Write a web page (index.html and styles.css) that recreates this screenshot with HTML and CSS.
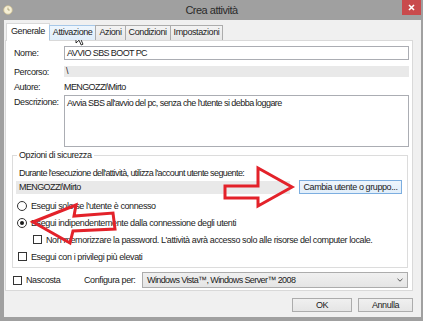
FILE: index.html
```html
<!DOCTYPE html>
<html>
<head>
    <meta charset="utf-8">
    <title>Crea attività</title>
    <link rel="stylesheet" href="styles.css">
</head>
<body>
    <div class="titlebar">
        <svg class="app-icon" width="10" height="10" viewBox="0 0 10 10"><circle cx="5" cy="5" r="4.3" fill="#f6f0d6" stroke="#cbbd8f" stroke-width="0.8"/><path d="M5 2.6V5h1.8" fill="none" stroke="#9a8c5c" stroke-width="0.7"/></svg>
        <div class="title">Crea attività</div>
        <div class="close"><svg width="7" height="7" viewBox="0 0 7 7"><path d="M1 1l5 5M6 1l-5 5" stroke="#fff" stroke-width="1.6"/></svg></div>
    </div>
    <div class="client">
        <div class="tabs">
            <div class="tab active">Generale</div>
            <div class="tab hover">Attivazione</div>
            <div class="tab">Azioni</div>
            <div class="tab">Condizioni</div>
            <div class="tab">Impostazioni</div>
        </div>
        <div class="panel">
            <div class="fields">
                <div class="row row-name">
                    <span class="label">Nome:</span>
                    <div class="input">AVVIO SBS BOOT PC</div>
                </div>
                <div class="row row-path">
                    <span class="label">Percorso:</span>
                    <div class="readonly">\</div>
                </div>
                <div class="row row-author">
                    <span class="label">Autore:</span>
                    <div class="value">MENGOZZI\Mirto</div>
                </div>
                <div class="row row-desc">
                    <span class="label">Descrizione:</span>
                    <div class="textarea">Avvia SBS all'avvio del pc, senza che l'utente si debba loggare</div>
                </div>
            </div>
            <fieldset class="group">
                <legend>Opzioni di sicurezza</legend>
                <div class="note">Durante l'esecuzione dell'attività, utilizza l'account utente seguente:</div>
                <div class="account-row">
                    <div class="account">MENGOZZI\Mirto</div>
                    <div class="btn btn-default">Cambia utente o gruppo...</div>
                </div>
                <div class="opt"><span class="radio"></span>Esegui solo se l'utente è connesso</div>
                <div class="opt"><span class="radio checked"></span>Esegui indipendentemente dalla connessione degli utenti</div>
                <div class="opt opt-sub"><span class="check"></span>Non memorizzare la password. L'attività avrà accesso solo alle risorse del computer locale.</div>
                <div class="opt opt-top"><span class="check"></span>Esegui con i privilegi più elevati</div>
            </fieldset>
            <div class="config-row">
                <div class="hidden-opt"><span class="check"></span>Nascosta</div>
                <div>Configura per:</div>
                <div class="select">
                    <span>Windows Vista™, Windows Server™ 2008</span>
                    <svg width="6" height="4" viewBox="0 0 6 4"><path d="M0.5 0.8L3 3.2 5.5 0.8" fill="none" stroke="#555" stroke-width="1"/></svg>
                </div>
            </div>
        </div>
        <div class="actions">
            <div class="btn btn-ok">OK</div>
            <div class="btn btn-cancel">Annulla</div>
        </div>
    </div>

    <svg class="overlay" width="423" height="321" viewBox="0 0 423 321">
        <path class="arrow" d="M225 186H258V168L292 187L258 206V198H225Z"/>
        <path class="arrow" d="M33 222L76 205L74 216L113 213L115 229L73 231L70 243Z"/>
        <path d="M76 31V43L79 40.2L81.2 45L83 44.2L80.8 39.4H84.5Z" fill="#fff" stroke="#000" stroke-width="0.8" stroke-linejoin="round"/>
    </svg>
</body>
</html>
```

FILE: styles.css
```css
* { box-sizing: border-box; }
html, body { margin: 0; padding: 0; }
body { width: 423px; height: 321px; overflow: hidden; position: relative; background: #a0a0a0; font-family: "Liberation Sans", Arial, sans-serif; font-size: 9px; letter-spacing: -0.4px; white-space: nowrap; color: #1b1b1b; }

.titlebar { display: grid; grid-template-columns: 1fr auto 1fr; align-items: center; height: 20px; }
.app-icon { display: block; margin-left: 3px; }
.title { font-size: 11px; letter-spacing: -0.5px; color: #2b2b2b; }
.close { justify-self: end; align-self: start; display: flex; align-items: center; justify-content: center; width: 19px; height: 15px; margin-right: 2px; background: #c94a4c; }
.close svg { display: block; }

.client { margin: 0 2px 0 4px; height: 297px; padding-top: 4px; background: #f0f0f0; }

.tabs { display: flex; align-items: flex-end; height: 16px; padding-left: 2px; position: relative; z-index: 1; }
.tab { height: 15px; line-height: 13px; padding: 0 3px; margin-left: -1px; border: 1px solid #acacac; border-bottom: none; background: linear-gradient(#f3f3f3, #e7e7e7); }
.tab:first-child { margin-left: 0; }
.tab.active { height: 18px; line-height: 15px; margin-bottom: -1px; padding: 0 4px; background: #fff; border-color: #d9d9d9; }
.tab.hover { background: linear-gradient(#eef6fd, #e0eefa); border-color: #a7c8e8; }

.panel { margin-left: 1px; width: 408px; height: 251px; background: #fff; border: 1px solid #d9d9d9; }

.fields { padding: 0 3px 0 8px; }
.row { display: flex; align-items: center; }
.row .label { width: 50px; flex: none; }
.row-name { margin-top: 5px; height: 14px; }
.row-path { margin-top: 6px; height: 11px; }
.row-author { margin-top: 4px; height: 12px; }
.row-desc { margin-top: 2px; height: 52px; align-items: flex-start; }
.row-desc .label { padding-top: 2px; line-height: 11px; }
.input { flex: 1; height: 14px; line-height: 12px; padding-left: 2px; border: 1px solid #abadb3; letter-spacing: -0.6px; }
.readonly { flex: 1; height: 11px; line-height: 11px; padding-left: 2px; background: #e9e9e9; }
.value { letter-spacing: -0.6px; }
.textarea { flex: 1; height: 52px; line-height: 11px; padding: 2px; border: 1px solid #abadb3; letter-spacing: -0.55px; }

.group { margin: 3px 4px 0 6px; padding: 0 5px 2px 3px; border: 1px solid #dcdcdc; min-width: 0; }
.group legend { margin-left: 1px; padding: 0 2px; line-height: 11px; }
.note { margin-top: 6px; padding-left: 3px; line-height: 12px; letter-spacing: -0.6px; }
.account-row { display: flex; align-items: center; margin-top: 1px; height: 14px; }
.account { width: 274px; height: 13px; line-height: 13px; padding-left: 3px; background: #e9e9e9; letter-spacing: -0.6px; }
.btn { display: flex; align-items: center; justify-content: center; height: 14px; border: 1px solid #acacac; background: linear-gradient(#f0f0f0, #e5e5e5); }
.btn-default { margin-left: auto; width: 103px; border-color: #7caee0; background: linear-gradient(#eef5fc, #e1eefa); }

.opt { display: flex; align-items: center; height: 17px; }
.opt:nth-of-type(3) { margin-top: 3px; }
.radio { width: 10px; height: 10px; margin: 0 4px 0 1px; border: 1px solid #333; border-radius: 50%; background: #fff; display: flex; align-items: center; justify-content: center; flex: none; }
.radio.checked::after { content: ""; width: 4px; height: 4px; border-radius: 50%; background: #1b1b1b; }
.check { width: 9px; height: 9px; margin-right: 4px; border: 1px solid #333; background: #fff; flex: none; }
.opt-sub { padding-left: 17px; }
.opt-top .check { margin-left: 2px; }

.config-row { display: grid; grid-template-columns: 71px 58px 1fr; align-items: center; height: 16px; margin: 4px 4px 0 7px; }
.hidden-opt { display: flex; align-items: center; }
.select { display: flex; align-items: center; justify-content: space-between; height: 16px; padding: 0 4px; border: 1px solid #acacac; background: linear-gradient(#f0f0f0, #e5e5e5); letter-spacing: -0.6px; }
.select svg { display: block; }

.actions { display: flex; justify-content: flex-end; gap: 6px; margin-top: 7px; padding-right: 8px; }
.btn-ok { width: 60px; }
.btn-cancel { width: 55px; }

.overlay { position: absolute; top: 0; left: 0; pointer-events: none; }
.arrow { fill: none; stroke: #e3222a; stroke-width: 3; stroke-linejoin: miter; }
```
